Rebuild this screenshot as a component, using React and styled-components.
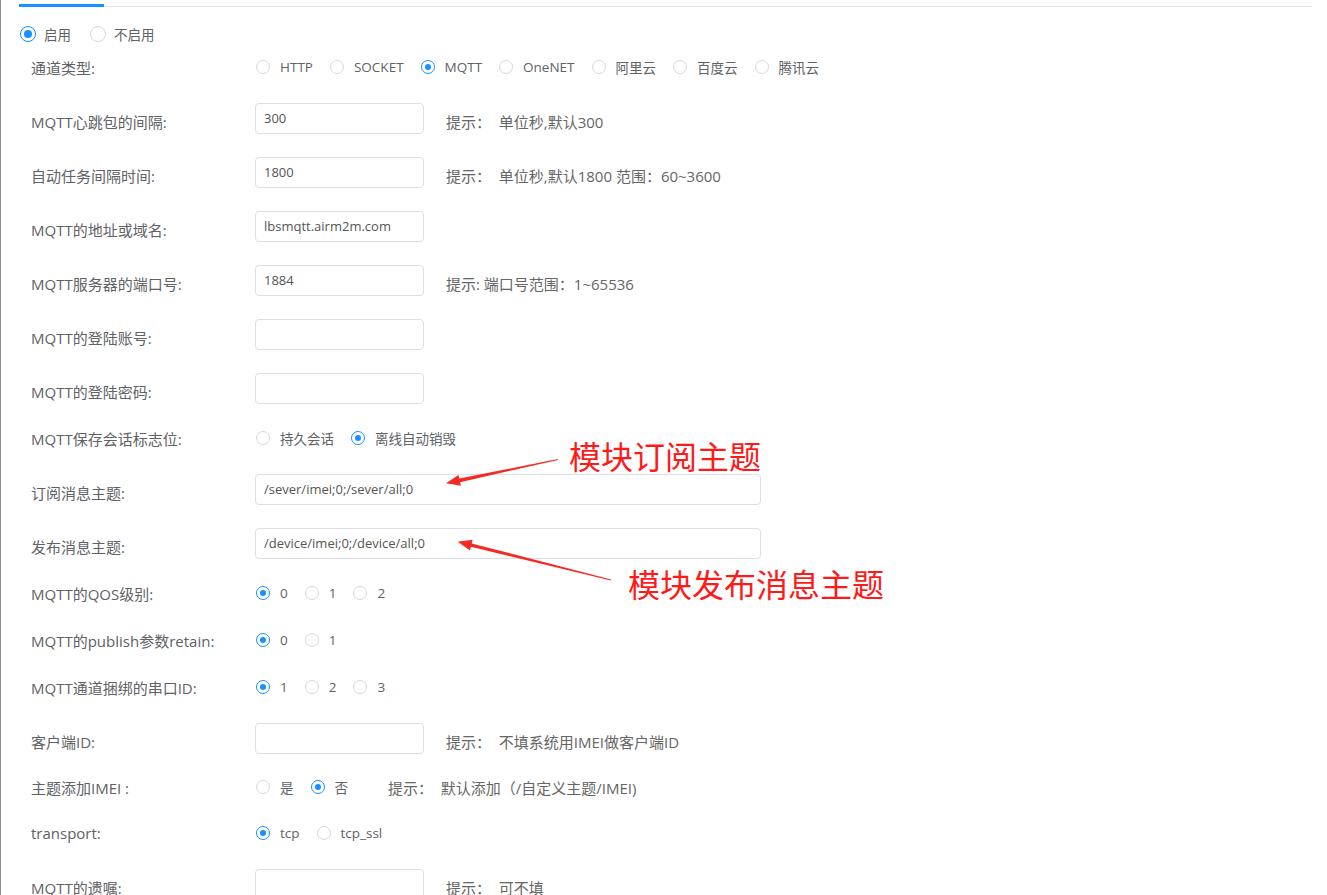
import React from 'react'
import styled, { createGlobalStyle } from 'styled-components'

const GlobalStyle = createGlobalStyle`
  html, body {
    margin: 0;
    padding: 0;
    background: #fff;
  }
  body {
    font-family: "Open Sans", "Noto Sans CJK SC", sans-serif;
    color: #606266;
  }
`

const Page = styled.div`
  position: relative;
  min-height: 895px;
  border-left: 1px solid #8a8f96;
  padding: 0 15px 0 18px;
  box-sizing: border-box;
  overflow: hidden;
`

const TabBar = styled.div`
  display: flex;
  align-items: flex-end;
  height: 6px;
  border-bottom: 1px solid #e4e7ed;
`

const InkBar = styled.div`
  width: 85px;
  height: 3px;
  margin-bottom: -1px;
  background: #1890ff;
`

const EnableRow = styled.div`
  display: flex;
  align-items: center;
  height: 32px;
  margin-top: 11px;
  padding-left: 1px;
`

const Form = styled.div`
  padding-left: 12px;
  margin-top: 1px;
`

const Row = styled.div`
  display: flex;
  align-items: center;
  height: 32px;
  margin-top: ${p => p.$gap}px;
`

const Label = styled.div`
  width: 224px;
  flex-shrink: 0;
  font-size: 15px;
  color: #606266;
  white-space: nowrap;
`

const Field = styled.div`
  width: ${p => (p.$wide ? 506 : 169)}px;
  height: 31px;
  box-sizing: border-box;
  border: 1px solid #dcdfe6;
  border-radius: 4px;
  margin-bottom: 6px;
  padding-left: 8px;
  display: flex;
  align-items: center;
  font-size: 13px;
  color: #555;
  flex-shrink: 0;
`

const Hint = styled.div`
  margin-left: ${p => p.$offset || 22}px;
  font-size: 15px;
  color: #666;
  white-space: pre;
`

const RadioGroup = styled.div`
  display: flex;
  align-items: center;
  padding-left: 1px;
`

const RadioItem = styled.label`
  display: flex;
  align-items: center;
  margin-right: ${p => (p.$big ? 19 : 17)}px;
`

const RadioCircle = styled.span`
  position: relative;
  width: ${p => (p.$big ? 16 : 14)}px;
  height: ${p => (p.$big ? 16 : 14)}px;
  box-sizing: border-box;
  border-radius: 50%;
  border: 1px solid ${p => (p.$checked ? '#1890ff' : '#d9d9d9')};
  background: #fff;
  flex-shrink: 0;
  &::after {
    content: '';
    display: ${p => (p.$checked ? 'block' : 'none')};
    position: absolute;
    left: 50%;
    top: 50%;
    width: ${p => (p.$big ? 8 : 6)}px;
    height: ${p => (p.$big ? 8 : 6)}px;
    margin: ${p => (p.$big ? -4 : -3)}px 0 0 ${p => (p.$big ? -4 : -3)}px;
    border-radius: 50%;
    background: #1890ff;
  }
`

const RadioText = styled.span`
  margin-left: ${p => (p.$big ? 8 : 10)}px;
  font-size: 13.5px;
  color: #606266;
  white-space: nowrap;
`

const Annotation = styled.div`
  position: absolute;
  left: ${p => p.$x}px;
  top: ${p => p.$y}px;
  font-size: 32px;
  line-height: 1;
  color: #ff1a1a;
  font-family: "Noto Sans CJK SC", sans-serif;
  white-space: nowrap;
`

const ArrowLayer = styled.svg`
  position: absolute;
  left: 0;
  top: 0;
  pointer-events: none;
`

const rows = [
  { label: '通道类型:', type: 'radio', gap: 0, options: ['HTTP', 'SOCKET', 'MQTT', 'OneNET', '阿里云', '百度云', '腾讯云'], checked: 2 },
  { label: 'MQTT心跳包的间隔:', type: 'input', gap: 22, value: '300', hint: '提示：  单位秒,默认300' },
  { label: '自动任务间隔时间:', type: 'input', gap: 22, value: '1800', hint: '提示：  单位秒,默认1800 范围：60~3600' },
  { label: 'MQTT的地址或域名:', type: 'input', gap: 22, value: 'lbsmqtt.airm2m.com' },
  { label: 'MQTT服务器的端口号:', type: 'input', gap: 22, value: '1884', hint: '提示: 端口号范围：1~65536' },
  { label: 'MQTT的登陆账号:', type: 'input', gap: 22, value: '' },
  { label: 'MQTT的登陆密码:', type: 'input', gap: 22, value: '' },
  { label: 'MQTT保存会话标志位:', type: 'radio', gap: 15, options: ['持久会话', '离线自动销毁'], checked: 1 },
  { label: '订阅消息主题:', type: 'input', gap: 22, wide: true, value: '/sever/imei;0;/sever/all;0' },
  { label: '发布消息主题:', type: 'input', gap: 22, wide: true, value: '/device/imei;0;/device/all;0' },
  { label: 'MQTT的QOS级别:', type: 'radio', gap: 15, options: ['0', '1', '2'], checked: 0 },
  { label: 'MQTT的publish参数retain:', type: 'radio', gap: 15, options: ['0', '1'], checked: 0 },
  { label: 'MQTT通道捆绑的串口ID:', type: 'radio', gap: 15, options: ['1', '2', '3'], checked: 0 },
  { label: '客户端ID:', type: 'input', gap: 22, value: '', hint: '提示：  不填系统用IMEI做客户端ID' },
  { label: '主题添加IMEI :', type: 'radio', gap: 14, options: ['是', '否'], checked: 1, hint: '提示：  默认添加（/自定义主题/IMEI)', hintOffset: 23 },
  { label: 'transport:', type: 'radio', gap: 14, options: ['tcp', 'tcp_ssl'], checked: 0 },
  { label: 'MQTT的遗嘱:', type: 'input', gap: 22, value: '', hint: '提示：  可不填' },
]

const Radio = ({ text, checked, big }) => (
  <RadioItem $big={big}>
    <RadioCircle $checked={checked} $big={big} />
    <RadioText $big={big}>{text}</RadioText>
  </RadioItem>
)

const Arrows = () => (
  <ArrowLayer width="1327" height="895">
    <polygon
      fill="#f52a22"
      points="445,483.3 457.5,475 458.3,478.6 556.7,459 556.9,460 459.1,482.2 459.9,485.8"
    />
    <polygon
      fill="#f52a22"
      points="456.7,541.7 471.6,539.8 470.7,543.4 610,579.4 609.8,580.6 469.9,546.8 469,550.4"
    />
  </ArrowLayer>
)

const App = () => {
  return (
    <Page>
      <GlobalStyle />
      <TabBar>
        <InkBar />
      </TabBar>
      <EnableRow>
        <Radio text="启用" checked big />
        <Radio text="不启用" big />
      </EnableRow>
      <Form>
        {rows.map(row => (
          <Row key={row.label} $gap={row.gap}>
            <Label>{row.label}</Label>
            {row.type === 'input' ? (
              <Field $wide={row.wide}>{row.value}</Field>
            ) : (
              <RadioGroup>
                {row.options.map((o, i) => (
                  <Radio key={o} text={o} checked={i === row.checked} />
                ))}
              </RadioGroup>
            )}
            {row.hint && <Hint $offset={row.hintOffset}>{row.hint}</Hint>}
          </Row>
        ))}
      </Form>
      <Arrows />
      <Annotation $x={568} $y={439}>模块订阅主题</Annotation>
      <Annotation $x={627} $y={567}>模块发布消息主题</Annotation>
    </Page>
  )
}

export default App
